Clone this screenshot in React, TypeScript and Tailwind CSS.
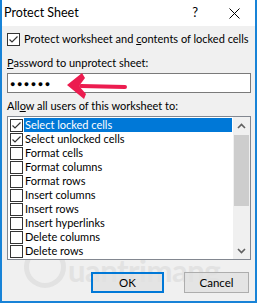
import React from 'react';

const ITEMS = [
  { label: 'Select locked cells', checked: true, selected: true },
  { label: 'Select unlocked cells', checked: true },
  { label: 'Format cells' },
  { label: 'Format columns' },
  { label: 'Format rows' },
  { label: 'Insert columns' },
  { label: 'Insert rows' },
  { label: 'Insert hyperlinks' },
  { label: 'Delete columns' },
  { label: 'Delete rows' },
];

function Check({ checked }: { checked?: boolean }) {
  return (
    <span className="w-[13px] h-[13px] shrink-0 border border-[#333] bg-white flex items-center justify-center">
      {checked && (
        <svg width="11" height="11" viewBox="0 0 11 11">
          <path d="M1.5 5.5 L4 8 L9.5 2.5" fill="none" stroke="#333" strokeWidth="1.2" />
        </svg>
      )}
    </span>
  );
}

export default function App() {
  return (
    <div
      className="w-[257px] h-[303px] relative overflow-hidden bg-[#f0f0f0] border-x-2 border-b-2 border-[#1883d7] text-[11px] text-black flex flex-col"
      style={{ fontFamily: 'Lato, "Noto Sans", sans-serif' }}
    >
      {/* title bar */}
      <div className="h-[26px] bg-white flex items-center pl-[2px] shrink-0">
        <span className="text-[12.5px]">Protect Sheet</span>
        <span className="ml-auto mr-[31px] text-[13px]">?</span>
        <svg width="11" height="11" viewBox="0 0 11 11" className="mr-[15px]">
          <path d="M0.5 0.5 L10.5 10.5 M10.5 0.5 L0.5 10.5" stroke="#000" strokeWidth="1" />
        </svg>
      </div>

      {/* watermark */}
      <div className="absolute left-[22px] top-[246px] flex items-center pointer-events-none">
        <span className="w-[42px] h-[42px] rounded-full border-[5px] border-[#e2e2e2]" />
        <span className="text-[31px] font-bold text-[#e2e2e2] leading-none tracking-[-0.5px] ml-[2px] mt-[6px]">uantrimang</span>
      </div>

      <div className="relative flex flex-col px-[5px]">
        <label className="flex items-center gap-[4px] mt-[7px] h-[13px]">
          <Check checked />
          <span className="whitespace-nowrap">
            Protect worksheet and <span className="underline">c</span>ontents of locked cells
          </span>
        </label>

        <div className="mt-[10px] leading-[14px]">
          <span className="underline">P</span>assword to unprotect sheet:
        </div>

        <div className="relative mt-[3px] h-[20px] w-[244px] bg-white border border-[#7a7a7a] flex items-center pl-[2px]">
          <span className="text-[9px] tracking-[1.5px] leading-none" style={{ fontFamily: '"Noto Sans", sans-serif' }}>●●●●●●</span>
          <svg width="70" height="32" viewBox="0 0 70 32" className="absolute left-[57px] top-[-2px]">
            <path d="M16 14 L60 15" stroke="#ec1c4f" strokeWidth="4" strokeLinecap="round" fill="none" />
            <path d="M2 13 L17 1 L20 6 L14 14 L21 22 L19 27 Z" fill="#ec1c4f" />
          </svg>
        </div>

        <div className="mt-[6px] leading-[14px]">
          All<span className="underline">o</span>w all users of this worksheet to:
        </div>

        <div className="mt-[3px] h-[144px] w-[244px] bg-white border border-[#828790] flex overflow-hidden">
          <div className="flex-1 flex flex-col pl-[2px] pt-[1px]">
            {ITEMS.map((it) => (
              <div key={it.label} className="h-[14px] flex items-center shrink-0">
                <Check checked={it.checked} />
                <span
                  className={
                    'ml-[1px] h-[14px] leading-[14px] pl-[1px] whitespace-nowrap ' +
                    (it.selected ? 'bg-[#0078d7] text-white flex-1' : '')
                  }
                >
                  {it.label}
                </span>
              </div>
            ))}
          </div>
          <div className="w-[17px] bg-[#f0f0f0] flex flex-col items-center shrink-0 ml-[1px]">
            <div className="h-[17px] flex items-center justify-center">
              <svg width="9" height="6" viewBox="0 0 9 6">
                <path d="M1 5 L4.5 1.5 L8 5" fill="none" stroke="#606060" strokeWidth="1.6" />
              </svg>
            </div>
            <div className="w-[15px] h-[71px] bg-[#cdcdcd] mt-[1px]" />
            <div className="mt-auto h-[17px] flex items-center justify-center">
              <svg width="9" height="6" viewBox="0 0 9 6">
                <path d="M1 1 L4.5 4.5 L8 1" fill="none" stroke="#606060" strokeWidth="1.6" />
              </svg>
            </div>
          </div>
        </div>

        <div className="flex justify-end gap-[20px] mt-[12px] pr-[1px]">
          <button className="w-[73px] h-[21px] bg-[#e1e1e1]/80 border-2 border-[#0078d7] flex items-center justify-center text-[11.5px]">
            OK
          </button>
          <button className="w-[65px] h-[21px] bg-[#e1e1e1]/80 border border-[#adadad] flex items-center justify-center text-[11.5px]">
            Cancel
          </button>
        </div>
      </div>
    </div>
  );
}
